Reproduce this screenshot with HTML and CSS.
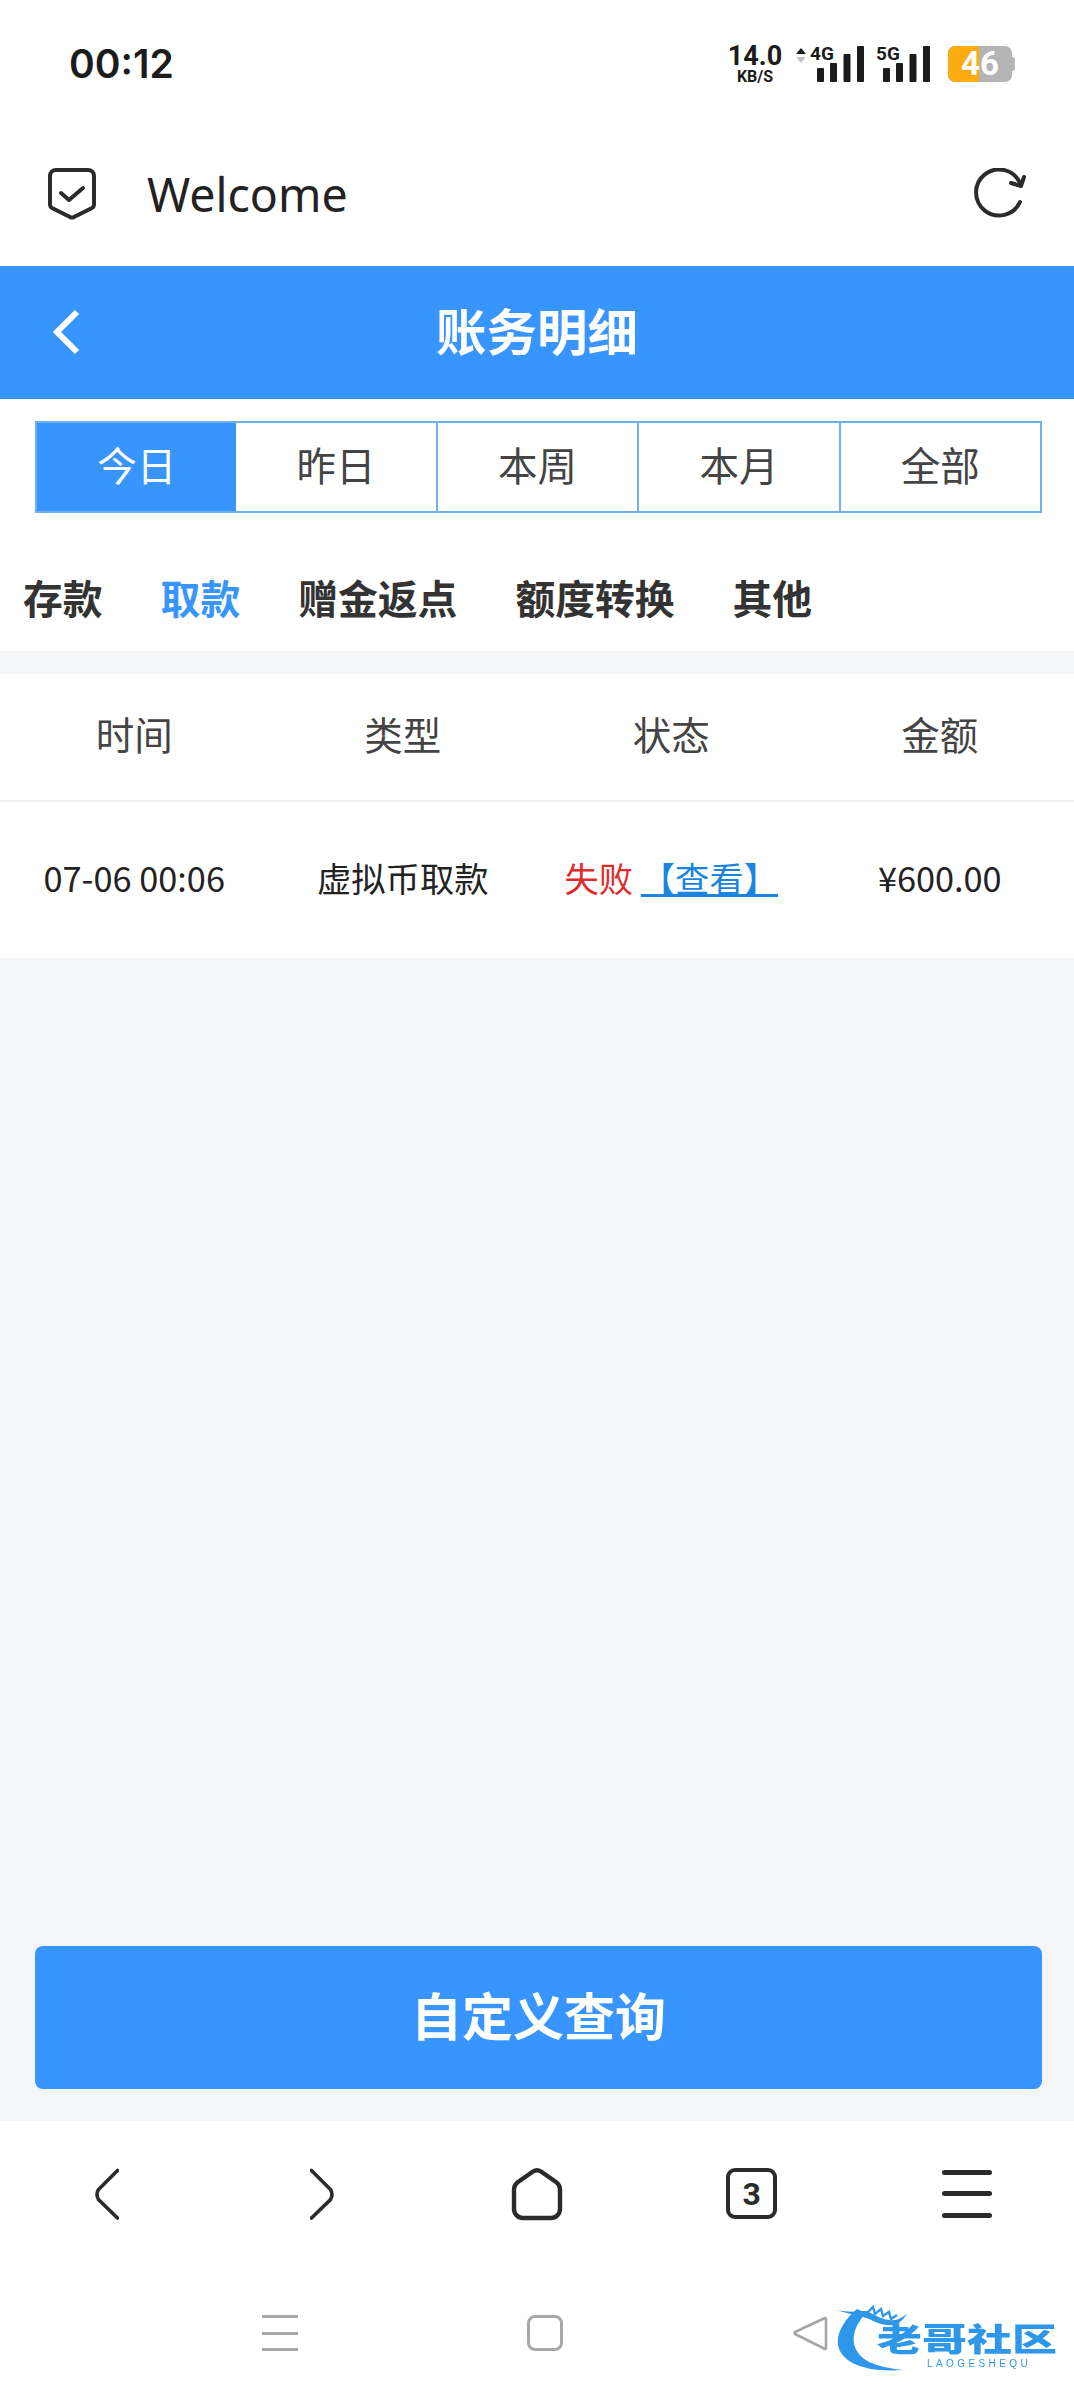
FILE: index.html
```html
<!DOCTYPE html>
<html lang="zh-CN">
<head>
    <meta charset="UTF-8">
    <meta name="viewport" content="width=device-width, initial-scale=1.0">
    <title>账务明细</title>
    <link rel="stylesheet" href="styles.css">
</head>
<body>

    <div class="status-bar">
        <span class="clock">00:12</span>
        <div class="status-icons">
            <div class="speed">
                <span class="speed-num">14.0</span>
                <span class="speed-unit">KB/S</span>
            </div>
            <svg class="arrows" width="10" height="18" viewBox="0 0 10 18">
                <path d="M0 7 5 1l5 6z" fill="#1c1c1c"/>
                <path d="M0 10 5 16l5-6z" fill="#c4c4c4"/>
            </svg>
            <div class="signal">
                <span class="net-label">4G</span>
                <svg width="47" height="36" viewBox="0 0 47 36">
                    <rect x="0" y="22" width="7" height="14" rx="1" fill="#1c1c1c"/>
                    <rect x="13" y="17" width="7" height="19" rx="1" fill="#1c1c1c"/>
                    <rect x="26.500" y="8" width="7" height="28" rx="1" fill="#1c1c1c"/>
                    <rect x="40" y="0" width="7" height="36" rx="1" fill="#1c1c1c"/>
                </svg>
            </div>
            <div class="signal second">
                <span class="net-label">5G</span>
                <svg width="47" height="36" viewBox="0 0 47 36">
                    <rect x="0" y="22" width="7" height="14" rx="1" fill="#1c1c1c"/>
                    <rect x="13" y="17" width="7" height="19" rx="1" fill="#1c1c1c"/>
                    <rect x="26.500" y="8" width="7" height="28" rx="1" fill="#1c1c1c"/>
                    <rect x="40" y="0" width="7" height="36" rx="1" fill="#1c1c1c"/>
                </svg>
            </div>
            <div class="battery">
                <div class="battery-fill"></div>
                <span class="battery-num">46</span>
            </div>
        </div>
    </div>

    <div class="browser-bar">
        <svg class="shield" width="50" height="54" viewBox="0 0 50 54">
            <path d="M9 3h32a6 6 0 0 1 6 6v29a4 4 0 0 1-2 3L27 50a4 4 0 0 1-4 0L5 41a4 4 0 0 1-2-3V9a6 6 0 0 1 6-6z" fill="none" stroke="#2b2b2b" stroke-width="4"/>
            <path d="M14 26l8 7 14-12" fill="none" stroke="#2b2b2b" stroke-width="4" stroke-linecap="round" stroke-linejoin="round"/>
        </svg>
        <span class="page-title">Welcome</span>
        <svg class="refresh" width="52" height="52" viewBox="0 0 52 52">
            <path d="M46 34A23 23 0 1 1 46 15" fill="none" stroke="#2b2b2b" stroke-width="4" stroke-linecap="round"/>
            <path d="M50 9 47 18 37 15" fill="none" stroke="#2b2b2b" stroke-width="4" stroke-linecap="round" stroke-linejoin="round"/>
        </svg>
    </div>

    <div class="app-header">
        <svg class="header-back" width="28" height="46" viewBox="0 0 28 46">
            <path d="M25 3 5 23l20 20" fill="none" stroke="#fff" stroke-width="6"/>
        </svg>
        <h1>账务明细</h1>
    </div>

    <div class="date-tabs">
        <div class="date-tab active">今日</div>
        <div class="date-tab">昨日</div>
        <div class="date-tab">本周</div>
        <div class="date-tab">本月</div>
        <div class="date-tab">全部</div>
    </div>

    <div class="type-tabs">
        <span>存款</span>
        <span class="current">取款</span>
        <span>赠金返点</span>
        <span>额度转换</span>
        <span>其他</span>
    </div>

    <div class="content">
        <div class="table">
            <div class="table-head">
                <div>时间</div>
                <div>类型</div>
                <div>状态</div>
                <div>金额</div>
            </div>
            <div class="table-row">
                <div>07-06 00:06</div>
                <div>虚拟币取款</div>
                <div><span class="failed">失败</span> <a class="view-link">【查看】</a></div>
                <div>¥600.00</div>
            </div>
        </div>
        <button type="button" class="query-btn">自定义查询</button>
    </div>

    <div class="browser-nav">
        <svg width="24" height="52" viewBox="0 0 24 52">
            <path d="M22.500 2.500 3.500 21.500Q0.500 26.500 3.500 31.500L22.500 50" fill="none" stroke="#2b2b2b" stroke-width="3.6" stroke-linecap="round"/>
        </svg>
        <svg width="24" height="52" viewBox="0 0 24 52">
            <path d="M1.500 2.500 20.500 21.500Q23.500 26.500 20.500 31.500L1.500 50" fill="none" stroke="#2b2b2b" stroke-width="3.6" stroke-linecap="round"/>
        </svg>
        <svg width="52" height="54" viewBox="0 0 52 54">
            <path d="M22 4.500Q26 2 30 4.500L45 15Q49 18 49 23V42A9 9 0 0 1 40 51H12A9 9 0 0 1 3 42V23Q3 18 7 15Z" fill="none" stroke="#2b2b2b" stroke-width="4.4" stroke-linejoin="round"/>
        </svg>
        <div class="tab-count">3</div>
        <div class="menu-icon"><i></i><i></i><i></i></div>
    </div>

    <div class="system-nav">
        <div class="sys-menu"><i></i><i></i><i></i></div>
        <div class="sys-home"></div>
        <svg width="36" height="36" viewBox="0 0 36 36">
            <path d="M33 3 3 17a1.5 1.5 0 0 0 0 2l30 15a1 1 0 0 0 1-1V4a1 1 0 0 0-1-1z" fill="none" stroke="#a6a6a6" stroke-width="2.6" stroke-linejoin="round"/>
        </svg>
    </div>

    <!-- site watermark sits on top of the system nav -->
    <div class="watermark">
        <svg width="110" height="68" viewBox="0 0 110 68">
            <path d="M20 4C8 14-1 28 1 40c3 17 26 28 66 25-30-3-46-10-50-26-2-12 4-22 12-31z" fill="#2f97ea"/>
            <path d="M0 5c12 3 22 1 30 1 8 4 14 8 22 9 8 1 12-2 18-6-4 6-8 10-14 11-8 1-16-2-24-6-6-3-18-4-32-9z" fill="#2f97ea"/>
            <path d="M30 8l6-6 2 7 6-5 2 7 6-4 2 7 6-4" fill="none" stroke="#2f97ea" stroke-width="2.4"/>
        </svg>
        <span class="wm-name">老哥社区</span>
        <span class="wm-sub">LAOGESHEQU</span>
    </div>

</body>
</html>
```

FILE: styles.css
```css
* {
    box-sizing: border-box;
}
html, body {
    margin: 0;
    padding: 0;
}
body {
    position: relative;
    width: 1074px;
    height: 2400px;
    display: flex;
    flex-direction: column;
    background-color: #fff;
    font-family: "Noto Sans CJK SC", "Noto Sans", sans-serif;
    overflow: hidden;
}

/* phone status bar */
.status-bar {
    height: 130px;
    display: flex;
    justify-content: space-between;
    padding: 44px 60px 0 69px;
}
.clock {
    font-family: Inter, sans-serif;
    font-size: 39px;
    font-weight: 600;
    line-height: 40px;
    color: #1c1c1c;
}
.status-icons {
    display: flex;
    align-items: flex-start;
}
.speed {
    width: 56px;
    display: flex;
    flex-direction: column;
    align-items: center;
    font-family: Roboto, sans-serif;
    color: #1c1c1c;
}
.speed-num {
    font-size: 27px;
    font-weight: 700;
    line-height: 25px;
}
.speed-unit {
    font-size: 16px;
    font-weight: 700;
    line-height: 15px;
}
.arrows {
    margin: 3px 0 0 13px;
}
.signal {
    position: relative;
    width: 54px;
    height: 38px;
    margin-left: 4px;
    padding: 2px 0 0 7px;
}
.signal.second {
    margin-left: 12px;
}
.net-label {
    position: absolute;
    left: 0;
    top: 0;
    font-family: Roboto, sans-serif;
    font-size: 19px;
    font-weight: 700;
    line-height: 19px;
    color: #1c1c1c;
}
.battery {
    position: relative;
    width: 64px;
    height: 36px;
    margin: 2px 2px 0 18px;
    border-radius: 7px;
    background-color: #b4b4b4;
    text-align: center;
}
.battery::after {
    content: "";
    position: absolute;
    right: -3px;
    top: 11px;
    width: 3px;
    height: 14px;
    border-radius: 0 3px 3px 0;
    background-color: #b4b4b4;
}
.battery-fill {
    width: 31px;
    height: 100%;
    border-radius: 7px 0 0 7px;
    background-color: #fbab0d;
}
.battery-num {
    position: absolute;
    left: 0;
    right: 0;
    top: 0;
    font-family: Roboto, sans-serif;
    font-size: 33px;
    font-weight: 700;
    line-height: 36px;
    color: #fff;
}

/* browser top bar */
.browser-bar {
    height: 136px;
    display: flex;
    align-items: center;
    padding: 0 48px 8px 47px;
}
.page-title {
    margin-left: 50px;
    flex: 1;
    font-family: "Noto Sans", sans-serif;
    font-size: 46.5px;
    color: #222;
}

.app-header {
    position: relative;
    height: 133px;
    padding-bottom: 8px;
    display: flex;
    align-items: center;
    justify-content: center;
    background-color: #3894ff;
}
.header-back {
    position: absolute;
    left: 52px;
    top: 43px;
}
.app-header h1 {
    margin: 0;
    font-size: 50.5px;
    font-weight: 700;
    color: #fff;
}

.date-tabs {
    height: 92px;
    margin: 22px 32px 0 35px;
    display: grid;
    grid-template-columns: repeat(5, 1fr);
    border-top: 2px solid #6fb1ea;
    border-bottom: 2px solid #6fb1ea;
}
.date-tab {
    display: flex;
    align-items: center;
    justify-content: center;
    padding-bottom: 8px;
    border-right: 2px solid #6fb1ea;
    font-size: 39.5px;
    color: #444;
}
.date-tab.active {
    background-color: #3894ff;
    border-left: 2px solid #6fb1ea;
    border-right: none;
    color: #fff;
}

.type-tabs {
    height: 138px;
    display: flex;
    align-items: center;
    gap: 58px;
    padding: 28px 0 0 23px;
    font-size: 39.8px;
    font-weight: 700;
    color: #333;
}
.type-tabs .current {
    color: #3894ff;
}

.content {
    flex: 1;
    display: flex;
    flex-direction: column;
    padding-top: 23px;
    background-color: #f4f6f8;
}
.table {
    background-color: #fff;
}
.table-head,
.table-row {
    display: grid;
    grid-template-columns: repeat(4, 1fr);
    align-items: center;
    text-align: center;
}
.table-head {
    height: 128px;
    padding-bottom: 8px;
    border-bottom: 2px solid #eef0f2;
    font-size: 38.5px;
    color: #444;
}
.table-row {
    height: 156px;
    padding-bottom: 6px;
    font-size: 34.3px;
    color: #222;
}
.failed {
    color: #e02b2b;
}
.view-link {
    color: #1b84df;
    text-decoration: underline;
}
.query-btn {
    height: 143px;
    margin: auto 32px 32px 35px;
    padding-bottom: 8px;
    border: none;
    border-radius: 8px;
    background-color: #3894ff;
    font-family: inherit;
    font-size: 51px;
    font-weight: 700;
    color: #fff;
}

/* browser bottom toolbar */
.browser-nav {
    height: 145px;
    display: grid;
    grid-template-columns: repeat(5, 1fr);
    justify-items: center;
    align-items: center;
}
.tab-count {
    width: 51px;
    height: 51px;
    display: flex;
    align-items: center;
    justify-content: center;
    border: 4px solid #2b2b2b;
    border-radius: 9px;
    font-family: Roboto, sans-serif;
    font-size: 32px;
    font-weight: 700;
    color: #2b2b2b;
}
.menu-icon {
    width: 50px;
    height: 48px;
    display: flex;
    flex-direction: column;
    justify-content: space-between;
}
.menu-icon i {
    height: 5px;
    border-radius: 3px;
    background-color: #2b2b2b;
}

/* android nav */
.system-nav {
    flex: 0 0 134px;
    display: grid;
    grid-template-columns: repeat(3, 265px);
    justify-items: center;
    align-items: center;
    padding: 0 0 0 147px;
}
.sys-menu {
    width: 36px;
    height: 36px;
    display: flex;
    flex-direction: column;
    justify-content: space-between;
}
.sys-menu i {
    height: 3px;
    background-color: #a8a8a8;
}
.sys-home {
    width: 36px;
    height: 36px;
    border: 3px solid #a8a8a8;
    border-radius: 8px;
}

.watermark {
    position: absolute;
    left: 837px;
    top: 2305px;
    width: 225px;
    height: 68px;
    color: #2f97ea;
    filter: blur(0.5px);
}
.wm-name {
    position: absolute;
    left: 40px;
    top: 14px;
    font-size: 45px;
    font-weight: 900;
    line-height: 36px;
    white-space: nowrap;
    transform: scaleY(0.72);
}
.wm-sub {
    position: absolute;
    left: 90px;
    top: 53px;
    font-family: "Liberation Sans", sans-serif;
    font-size: 10px;
    letter-spacing: 3.4px;
    line-height: 11px;
    white-space: nowrap;
}
```
